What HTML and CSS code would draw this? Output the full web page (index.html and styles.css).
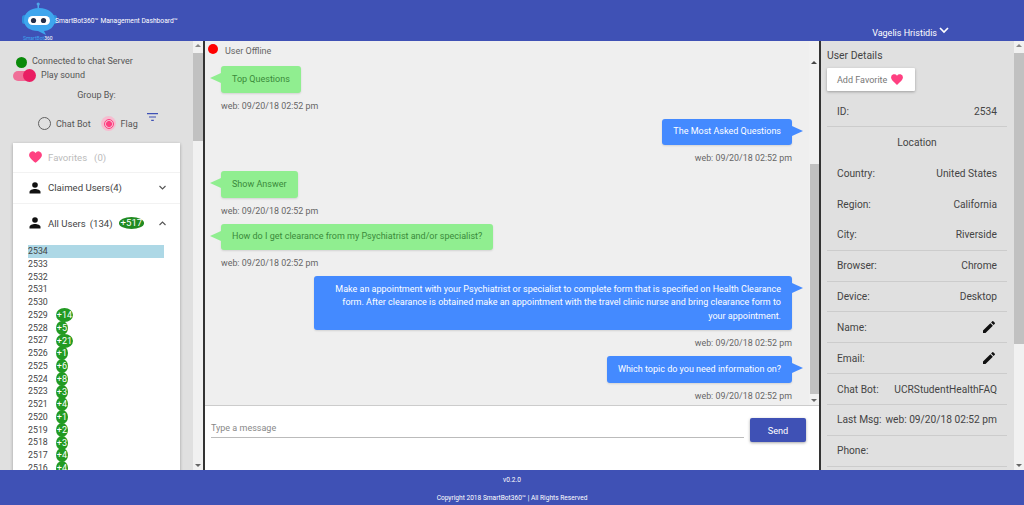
FILE: index.html
```html
<!DOCTYPE html>
<html lang="en">
<head>
    <meta charset="UTF-8">
    <meta name="viewport" content="width=device-width, initial-scale=1.0">
    <title>SmartBot360 Management Dashboard</title>
    <link rel="stylesheet" href="styles.css">
</head>
<body>
    <header class="topbar">
        <div class="brand">
            <svg class="logo" width="38" height="34" viewBox="0 0 38 34">
                <rect x="15.5" y="1" width="1.5" height="7" fill="#4fa8e8"/>
                <circle cx="16.2" cy="2" r="1.6" fill="#4fa8e8"/>
                <rect x="0" y="13" width="5" height="9" rx="2.5" fill="#2f8fdc"/>
                <rect x="30" y="13" width="5" height="9" rx="2.5" fill="#2f8fdc"/>
                <path d="M17 6C26 6 33 11 33 18C33 25 27 29 22 29L24 33L16 29C8 29 2 25 2 18C2 11 8 6 17 6Z" fill="#3ea6ee"/>
                <rect x="6" y="14" width="22" height="9" rx="4.5" fill="#fff"/>
                <circle cx="11.5" cy="18.500" r="2.6" fill="#26304a"/>
                <circle cx="21.5" cy="18.500" r="2.6" fill="#26304a"/>
            </svg>
            <span class="brand-mark"><span class="brand-mark-blue">SmartBot</span>360</span>
            <span class="brand-title">SmartBot360™ Management Dashboard™</span>
        </div>
        <div class="account">
            <span>Vagelis Hristidis</span>
            <svg width="12" height="12" viewBox="0 0 24 24"><path d="M4 8l8 8 8-8" fill="none" stroke="#fff" stroke-width="3.4"/></svg>
        </div>
    </header>

    <main class="workspace">
        <aside class="users-col">
            <div class="users-panel">
                <div class="status-row">
                    <span class="dot dot-green"></span>
                    <span>Connected to chat Server</span>
                </div>
                <div class="sound-row">
                    <span class="switch"><span class="switch-knob"></span></span>
                    <span>Play sound</span>
                </div>
                <div class="group-title">Group By:</div>
                <div class="group-row">
                    <span class="radio"></span>
                    <span class="radio-label">Chat Bot</span>
                    <span class="radio-halo"><span class="radio radio-on"></span></span>
                    <span class="radio-label radio-label-flag">Flag</span>
                    <svg class="filter-icon" width="11" height="8" viewBox="0 0 11 8">
                        <path d="M0 .6h11M2 4h7M4.200 7.400h2.600" stroke="#3f51b5" stroke-width="1.1"/>
                    </svg>
                </div>
                <div class="users-card">
                    <div class="card-row row-fav">
                        <svg width="15" height="14" viewBox="0 0 24 24"><path d="M12 22C5 16 1 12.500 1 8A6 6 0 0 1 12 5A6 6 0 0 1 23 8C23 12.500 19 16 12 22Z" fill="#ff4081"/></svg>
                        <span class="fav-label">Favorites</span>
                        <span class="fav-label fav-count">(0)</span>
                    </div>
                    <div class="card-row">
                        <svg class="person" width="12" height="12" viewBox="0 0 12 12"><circle cx="6" cy="3" r="2.8" fill="#111"/><path d="M.5 11.500V10C.5 8 3.500 7 6 7S11.500 8 11.500 10V11.500Z" fill="#111"/></svg>
                        <span class="row-label">Claimed Users(4)</span>
                        <svg class="chev" width="9" height="9" viewBox="0 0 24 24"><path d="M4 8l8 8 8-8" fill="none" stroke="#555" stroke-width="3"/></svg>
                    </div>
                    <div class="card-row row-last">
                        <svg class="person" width="12" height="12" viewBox="0 0 12 12"><circle cx="6" cy="3" r="2.8" fill="#111"/><path d="M.5 11.500V10C.5 8 3.500 7 6 7S11.500 8 11.500 10V11.500Z" fill="#111"/></svg>
                        <span class="row-label">All Users</span>
                        <span class="row-label row-count">(134)</span>
                        <span class="total-badge">+517</span>
                        <svg class="chev" width="9" height="9" viewBox="0 0 24 24"><path d="M4 16l8-8 8 8" fill="none" stroke="#555" stroke-width="3"/></svg>
                    </div>
                    <ul class="user-list">
                        <li class="user-active">2534</li>
                        <li>2533</li>
                        <li>2532</li>
                        <li>2531</li>
                        <li>2530</li>
                        <li>2529<span class="badge">+14</span></li>
                        <li>2528<span class="badge">+5</span></li>
                        <li>2527<span class="badge">+21</span></li>
                        <li>2526<span class="badge">+1</span></li>
                        <li>2525<span class="badge">+6</span></li>
                        <li>2524<span class="badge">+8</span></li>
                        <li>2523<span class="badge">+3</span></li>
                        <li>2521<span class="badge">+4</span></li>
                        <li>2520<span class="badge">+1</span></li>
                        <li>2519<span class="badge">+2</span></li>
                        <li>2518<span class="badge">+3</span></li>
                        <li>2517<span class="badge">+4</span></li>
                        <li>2516<span class="badge">+4</span></li>
                    </ul>
                </div>
            </div>
            <div class="scrollbar">
                <span class="arrow-up"></span>
                <span class="thumb thumb-users"></span>
                <span class="arrow-down"></span>
            </div>
        </aside>

        <section class="chat-col">
            <div class="chat-top">
                <div class="chat-log">
                    <div class="offline-row">
                        <span class="dot dot-red"></span>
                        <span>User Offline</span>
                    </div>
                    <div class="msg msg-in">
                        <div class="bubble">Top Questions</div>
                        <div class="msg-time">web: 09/20/18 02:52 pm</div>
                    </div>
                    <div class="msg msg-out">
                        <div class="bubble">The Most Asked Questions</div>
                        <div class="msg-time">web: 09/20/18 02:52 pm</div>
                    </div>
                    <div class="msg msg-in">
                        <div class="bubble">Show Answer</div>
                        <div class="msg-time">web: 09/20/18 02:52 pm</div>
                    </div>
                    <div class="msg msg-in">
                        <div class="bubble">How do I get clearance from my Psychiatrist and/or specialist?</div>
                        <div class="msg-time">web: 09/20/18 02:52 pm</div>
                    </div>
                    <div class="msg msg-out msg-long">
                        <div class="bubble bubble-wide">Make an appointment with your Psychiatrist or specialist to complete form that is specified on Health Clearance form. After clearance is obtained make an appointment with the travel clinic nurse and bring clearance form to your appointment.</div>
                        <div class="msg-time">web: 09/20/18 02:52 pm</div>
                    </div>
                    <div class="msg msg-out">
                        <div class="bubble">Which topic do you need information on?</div>
                        <div class="msg-time">web: 09/20/18 02:52 pm</div>
                    </div>
                </div>
                <div class="scrollbar">
                    <span class="arrow-up arrow-chat"></span>
                    <span class="thumb thumb-chat"></span>
                    <span class="arrow-down"></span>
                </div>
            </div>
            <div class="composer">
                <div class="composer-input">Type a message</div>
                <button class="send-btn">Send</button>
            </div>
        </section>

        <aside class="details-col">
            <div class="details-panel">
                <div class="details-title">User Details</div>
                <button class="fav-btn">
                    Add Favorite
                    <svg width="14" height="13" viewBox="0 0 24 24"><path d="M12 22C5 16 1 12.500 1 8A6 6 0 0 1 12 5A6 6 0 0 1 23 8C23 12.500 19 16 12 22Z" fill="#ff4081"/></svg>
                </button>
                <div class="detail-row detail-line"><span>ID:</span><span>2534</span></div>
                <div class="detail-row detail-center">Location</div>
                <div class="detail-row"><span>Country:</span><span>United States</span></div>
                <div class="detail-row"><span>Region:</span><span>California</span></div>
                <div class="detail-row detail-line"><span>City:</span><span>Riverside</span></div>
                <div class="detail-row detail-line"><span>Browser:</span><span>Chrome</span></div>
                <div class="detail-row detail-line"><span>Device:</span><span>Desktop</span></div>
                <div class="detail-row detail-line"><span>Name:</span>
                    <svg width="16" height="16" viewBox="0 0 24 24"><path d="M3 17.250V21h3.750L17.810 9.940l-3.750-3.750L3 17.250zM20.710 7.040a1 1 0 0 0 0-1.410l-2.340-2.340a1 1 0 0 0-1.410 0l-1.830 1.830 3.750 3.750 1.830-1.830z" fill="#111"/></svg>
                </div>
                <div class="detail-row detail-line"><span>Email:</span>
                    <svg width="16" height="16" viewBox="0 0 24 24"><path d="M3 17.250V21h3.750L17.810 9.940l-3.750-3.750L3 17.250zM20.710 7.040a1 1 0 0 0 0-1.410l-2.340-2.340a1 1 0 0 0-1.410 0l-1.830 1.830 3.750 3.750 1.830-1.830z" fill="#111"/></svg>
                </div>
                <div class="detail-row detail-line"><span>Chat Bot:</span><span>UCRStudentHealthFAQ</span></div>
                <div class="detail-row detail-line"><span>Last Msg:</span><span>web: 09/20/18 02:52 pm</span></div>
                <div class="detail-row detail-line"><span>Phone:</span></div>
            </div>
            <div class="scrollbar">
                <span class="arrow-up"></span>
                <span class="thumb thumb-details"></span>
                <span class="arrow-down"></span>
            </div>
        </aside>
    </main>

    <footer class="footer">
        <div>v0.2.0</div>
        <div>Copyright 2018 SmartBot360™ | All Rights Reserved</div>
    </footer>
</body>
</html>
```

FILE: styles.css
```css
html, body {
    margin: 0;
    padding: 0;
    height: 505px;
    overflow: hidden;
}
body {
    display: flex;
    flex-direction: column;
    font-family: Roboto, "Noto Sans", sans-serif;
    font-size: 9px;
    color: #555;
    background: #3f51b5;
}

/* top bar */
.topbar {
    height: 41px;
    flex: none;
    background: #3f51b5;
    color: white;
    display: flex;
    justify-content: space-between;
}
.brand {
    position: relative;
    width: 300px;
}
.logo {
    position: absolute;
    left: 22px;
    top: 2px;
}
.brand-mark {
    position: absolute;
    left: 23px;
    top: 35px;
    font-size: 5px;
    line-height: 6px;
}
.brand-mark-blue {
    color: #3ea6ee;
}
.brand-title {
    position: absolute;
    left: 55px;
    top: 16px;
    font-size: 6.7px;
    line-height: 10px;
    white-space: nowrap;
}
.account {
    display: flex;
    align-items: flex-start;
    gap: 1px;
    padding: 27px 74px 0 0;
    font-size: 9px;
    line-height: 12px;
}
.account svg {
    margin-top: -3px;
}

/* layout */
.workspace {
    height: 429px;
    flex: none;
    display: flex;
    background: white;
}
.users-col {
    width: 203px;
    flex: none;
    display: flex;
    border-right: 2px solid #333;
}
.users-panel {
    width: 193px;
    flex: none;
    background: #e0e0e0;
    overflow: hidden;
}
.chat-col {
    width: 614px;
    flex: none;
    display: flex;
    flex-direction: column;
}
.details-col {
    flex: 1;
    min-width: 0;
    display: flex;
    border-left: 2px solid #333;
}
.details-panel {
    flex: 1;
    min-width: 0;
    background: #e0e0e0;
    padding: 8px 7px 0 6px;
    overflow: hidden;
}

/* fake scrollbars */
.scrollbar {
    width: 10px;
    flex: none;
    background: #f1f1f1;
    position: relative;
    display: flex;
    flex-direction: column;
    align-items: center;
}
.thumb {
    display: block;
    width: 100%;
    background: #c1c1c1;
}
.thumb-users {
    margin-top: 6px;
    height: 88px;
}
.thumb-chat {
    margin-top: 100px;
    height: 230px;
    width: 9px;
}
.thumb-details {
    margin-top: 6px;
    height: 291px;
}
.arrow-up, .arrow-down {
    width: 0;
    height: 0;
    border-left: 3px solid transparent;
    border-right: 3px solid transparent;
}
.arrow-up {
    border-bottom: 3px solid #888;
    margin-top: 3px;
    flex: none;
}
.arrow-chat {
    margin-top: 20px;
    border-bottom-color: #444;
}
.arrow-down {
    border-top: 3px solid #666;
    position: absolute;
    bottom: 3px;
    left: 2px;
}

/* users panel */
.dot {
    display: block;
    width: 11px;
    height: 11px;
    border-radius: 50%;
    flex: none;
}
.dot-green { background: #0a8a0a; }
.dot-red { background: #ff0000; }
.status-row {
    display: flex;
    align-items: center;
    gap: 5px;
    padding: 13px 0 0 16px;
    line-height: 12px;
}
.status-row .dot {
    margin-top: 3px;
}
.sound-row {
    display: flex;
    align-items: center;
    gap: 8px;
    padding: 1px 0 0 13px;
    line-height: 13px;
}
.switch {
    display: block;
    width: 20px;
    height: 10px;
    border-radius: 5px;
    background: #f06f98;
    position: relative;
}
.switch-knob {
    position: absolute;
    right: -3px;
    top: -1.5px;
    width: 13px;
    height: 13px;
    border-radius: 50%;
    background: #e91e63;
}
.group-title {
    margin-top: 7px;
    text-align: center;
    line-height: 13px;
}
.group-row {
    display: flex;
    align-items: center;
    padding: 14px 0 0 38px;
    height: 15px;
}
.radio {
    display: block;
    width: 11px;
    height: 11px;
    border: 1.5px solid #616161;
    border-radius: 50%;
    flex: none;
}
.radio-on {
    border-color: #ff4081;
    width: 8px;
    height: 8px;
    background: radial-gradient(circle, #ff4081 0 2.7px, transparent 3.2px);
}
.radio-halo {
    display: flex;
    align-items: center;
    justify-content: center;
    width: 15px;
    height: 15px;
    border-radius: 50%;
    background: #f6bdd0;
    margin-left: 10.5px;
}
.radio-label {
    margin-left: 5px;
}
.radio-label-flag {
    margin-left: 4.5px;
}
.filter-icon {
    margin: -13px 0 0 9px;
}
.users-card {
    margin: 12px 0 0 13px;
    width: 167px;
    background: white;
    box-shadow: 0 1px 3px rgba(0,0,0,0.3);
    height: 340px;
    overflow: hidden;
}
.card-row {
    height: 31px;
    display: flex;
    align-items: center;
    padding: 0 13.5px 0 16px;
    font-size: 9.6px;
    color: #444;
    border-bottom: 1px solid #f2f2f2;
    box-sizing: border-box;
}
.row-fav {
    height: 29.5px;
    padding-left: 15px;
}
.row-last {
    height: 38px;
    padding-top: 1px;
    border-bottom: 0;
}
.fav-label {
    margin-left: 5px;
    color: #bbb;
}
.fav-count {
    margin-left: 7px;
}
.row-label {
    margin-left: 7px;
}
.row-count {
    margin-left: 4px;
}
.chev {
    margin-left: auto;
}
.total-badge {
    margin-left: 6px;
    padding: 0 2px;
    height: 12px;
    line-height: 12px;
    border-radius: 50%;
    background: #228b22;
    color: white;
}
.user-list {
    list-style: none;
    margin: 3.5px 0 0;
    padding: 0 16px 0 15px;
}
.user-list li {
    height: 12.75px;
    line-height: 12.75px;
    display: flex;
    align-items: center;
    font-size: 8.8px;
    color: #444;
}
.user-active {
    background: #add8e6;
}
.badge {
    margin-left: 8px;
    min-width: 10px;
    padding: 0 1px;
    height: 14px;
    line-height: 14px;
    border-radius: 50%;
    background: #229a22;
    color: white;
    text-align: center;
    font-size: 9px;
}

/* chat */
.chat-top {
    height: 364px;
    flex: none;
    display: flex;
    background: #efefef;
    border-bottom: 1px solid #ccc;
}
.chat-log {
    flex: 1;
    min-width: 0;
    overflow: hidden;
    padding: 0 17px 0 16px;
}
.offline-row {
    display: flex;
    align-items: center;
    gap: 7px;
    margin-left: -13px;
    height: 20px;
    color: #666;
}
.offline-row .dot {
    width: 10px;
    height: 10px;
    margin-top: -4px;
}
.msg {
    height: 52.500px;
    display: flex;
    flex-direction: column;
}
.msg-in {
    align-items: flex-start;
}
.msg-out {
    align-items: flex-end;
}
.msg-long {
    height: 80px;
}
.offline-row + .msg {
    margin-top: 5px;
}
.bubble {
    position: relative;
    background: #90ee90;
    color: #3a8a3a;
    padding: 6.500px 11px;
    line-height: 13.500px;
    border-radius: 3px;
    box-shadow: 0 1px 2px rgba(0,0,0,0.12);
    flex: none;
}
.bubble::after {
    content: "";
    position: absolute;
    top: 7px;
    border-top: 5px solid transparent;
    border-bottom: 5px solid transparent;
}
.msg-in .bubble::after {
    left: -11px;
    border-right: 11px solid #90ee90;
}
.msg-out .bubble {
    background: #448aff;
    color: white;
    text-align: right;
}
.msg-out .bubble::after {
    right: -11px;
    border-left: 11px solid #448aff;
}
.bubble-wide {
    width: 456px;
}
.msg-time {
    margin-top: 7px;
    line-height: 12px;
    font-size: 8.9px;
    color: #666;
}
.composer {
    flex: 1;
    display: flex;
    align-items: flex-start;
    gap: 6px;
    background: white;
    padding: 12px 13px 0 6px;
}
.composer-input {
    flex: 1;
    min-width: 0;
    height: 20px;
    box-sizing: border-box;
    padding-top: 4px;
    line-height: 12px;
    color: #888;
    border-bottom: 1px solid #bbb;
}
.send-btn {
    width: 56px;
    height: 24px;
    border: none;
    border-radius: 2px;
    background: #3f51b5;
    color: white;
    font-family: inherit;
    font-size: 9.2px;
    box-shadow: 0 1px 3px rgba(0,0,0,0.35);
}

/* details */
.details-title {
    line-height: 14px;
    font-size: 10.4px;
    color: #444;
}
.fav-btn {
    display: flex;
    align-items: center;
    gap: 3px;
    margin-top: 5px;
    width: 88px;
    height: 23px;
    padding: 0 0 0 10px;
    border: none;
    border-radius: 1px;
    background: white;
    color: #777;
    font-family: inherit;
    font-size: 9px;
    box-shadow: 0 1px 3px rgba(0,0,0,0.3);
}
.detail-row {
    box-sizing: border-box;
    height: 30.850px;
    display: flex;
    align-items: center;
    justify-content: space-between;
    padding: 0 10px;
    font-size: 10.2px;
    color: #444;
    white-space: nowrap;
}
.fav-btn + .detail-row {
    margin-top: 5.5px;
}
.detail-line {
    border-bottom: 1px solid #ccc;
}
.detail-center {
    justify-content: center;
}

/* footer */
.footer {
    flex: 1;
    background: #3f51b5;
    color: white;
    font-size: 6.600px;
    line-height: 8px;
    text-align: center;
    display: flex;
    flex-direction: column;
    gap: 10px;
    padding-top: 6px;
}
```
